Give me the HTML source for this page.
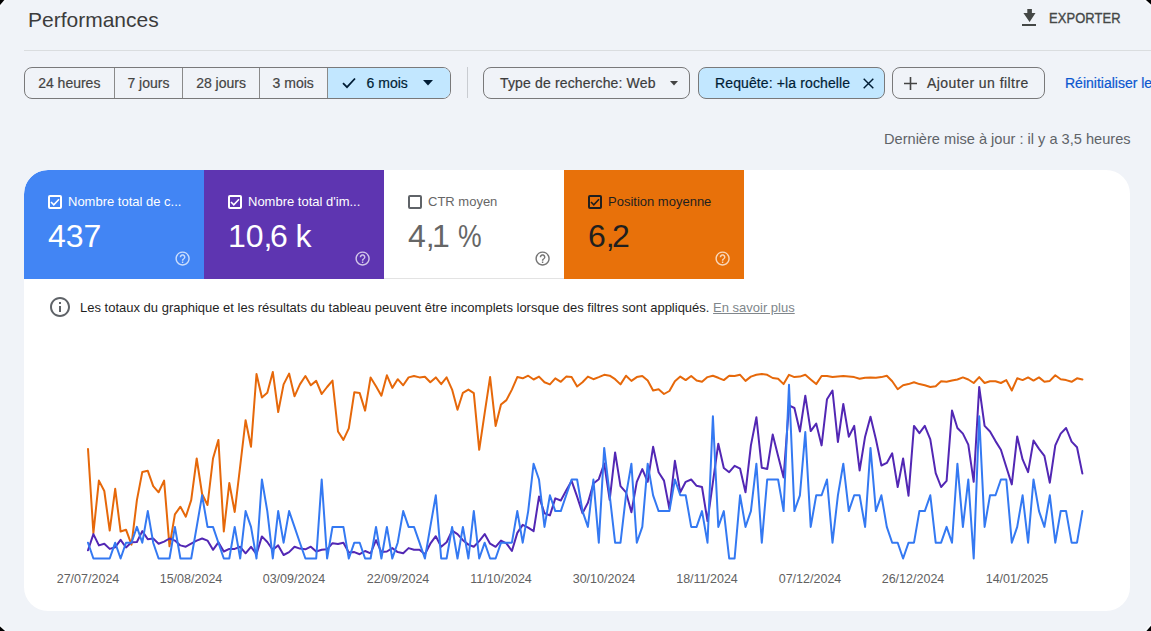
<!DOCTYPE html>
<html><head><meta charset="utf-8">
<style>
*{box-sizing:border-box;margin:0;padding:0}
html,body{width:1151px;height:631px;overflow:hidden;background:#f0f3f8;font-family:"Liberation Sans",sans-serif;color:#1f1f1f}
.abs{position:absolute}
.corner{position:absolute;width:0;height:0}
#title{left:28px;top:8px;font-size:21px;color:#3c3c3c;white-space:nowrap}
#hr{left:24px;top:50px;width:1127px;height:1px;background:#dadddf}
#export{left:1049px;top:10px;font-size:14px;letter-spacing:0.1px;-webkit-text-stroke:0.35px #444746;transform-origin:0 0;transform:scaleX(0.925);color:#444746;white-space:nowrap}
.grp{position:absolute;top:67px;height:32px;border:1px solid #79797a;border-radius:8px;overflow:hidden;display:flex}
.seg{height:30px;line-height:30px;font-size:14px;color:#444;-webkit-text-stroke:0.2px currentColor;text-align:center;border-right:1px solid #8a8a8a;white-space:nowrap}
.btn{position:absolute;top:67px;height:32px;border:1px solid #79797a;border-radius:8px;font-size:14px;color:#3c3c3c;white-space:nowrap}
.btn span{position:absolute;top:0;line-height:30px;-webkit-text-stroke:0.2px currentColor}
#card{left:24px;top:170px;width:1106px;height:441px;background:#fff;border-radius:24px;overflow:hidden}
.tile{position:absolute;top:0;width:180px;height:109px}
.tile .cb{position:absolute;left:24px;top:25px;width:14px;height:14px;border:2px solid #fff;border-radius:2px}
.tile .lbl{position:absolute;left:44px;top:24px;font-size:13px;white-space:nowrap}
.tile .val{position:absolute;left:24px;top:48px;font-size:32px;white-space:nowrap}
.tile .help{position:absolute;left:150.3px;top:79.9px;width:17.2px;height:17.2px}
.tick{position:absolute;top:572px;font-size:12.5px;color:#616161;white-space:nowrap;transform:translateX(-50%)}
</style></head>
<body>

<svg class="abs" style="left:0;top:0" width="1151" height="631">
<g stroke="#fff" stroke-width="1" stroke-opacity="0.85" fill="none"><line x1="6" y1="0" x2="0" y2="7"/><line x1="1144" y1="0" x2="1151" y2="6"/><line x1="0" y1="625" x2="6.5" y2="631"/><line x1="1151" y1="624" x2="1145" y2="631"/></g>
<g fill="#000"><polygon points="-1,-1 5.2,-1 -1,6.2"/><polygon points="1144.8,-1 1152,-1 1152,5.3"/><polygon points="-1,625.6 6.2,632 -1,632"/><polygon points="1152,624.6 1152,632 1145.6,632"/></g></svg>
<div id="title" class="abs">Performances</div>
<div id="hr" class="abs"></div>
<svg class="abs" style="left:1022px;top:9px" width="14" height="17" viewBox="0 0 14 17"><path d="M5.3 0h4.6v4.1H13.5L7.6 13 1.4 4.1h3.9z" fill="#444746"/><rect x="0" y="15" width="14" height="2" fill="#444746"/></svg>
<div id="export" class="abs">EXPORTER</div>

<div class="grp" style="left:24px;width:427px">
  <div class="seg" style="width:90px">24 heures</div>
  <div class="seg" style="width:69px">7 jours</div>
  <div class="seg" style="width:77px">28 jours</div>
  <div class="seg" style="width:68px">3 mois</div>
  <div class="seg" style="width:123px;border-right:none;background:#c2e7ff;color:#001d35;position:relative">
    <svg class="abs" style="left:14px;top:9px" width="14" height="12" viewBox="0 0 14 12"><path d="M1 6.2l4 4L13 1.5" stroke="#001d35" stroke-width="1.8" fill="none"/></svg>
    <span class="abs" style="left:39px;top:0">6 mois</span>
    <svg class="abs" style="left:95px;top:12px" width="10" height="6" viewBox="0 0 10 6"><path d="M0 0h10L5 5.5z" fill="#001d35"/></svg>
  </div>
</div>
<div class="abs" style="left:467px;top:67px;width:1px;height:31px;background:#c9ccd1"></div>

<div class="btn" style="left:483px;width:207px">
  <span style="left:16px;letter-spacing:0.15px">Type de recherche: Web</span>
  <svg class="abs" style="left:186px;top:13px" width="8" height="5" viewBox="0 0 8 5"><path d="M0 0h8L4 4.5z" fill="#444"/></svg>
</div>
<div class="btn" style="left:698px;width:187px;background:#c2e7ff;color:#001d35">
  <span style="left:16px;letter-spacing:0.12px">Requête: +la rochelle</span>
  <svg class="abs" style="left:163.5px;top:10px" width="11" height="11" viewBox="0 0 11 11"><path d="M0.7 0.7l9.6 9.6M10.3 0.7l-9.6 9.6" stroke="#001d35" stroke-width="1.45"/></svg>
</div>
<div class="btn" style="left:892px;width:153px">
  <svg class="abs" style="left:11px;top:9px" width="13" height="13" viewBox="0 0 13 13"><path d="M6.5 0v13M0 6.5h13" stroke="#444" stroke-width="1.6"/></svg>
  <span style="left:34px;letter-spacing:0.45px">Ajouter un filtre</span>
</div>
<div class="abs" style="left:1065px;top:75px;font-size:14px;color:#0b57d0;-webkit-text-stroke:0.2px #0b57d0;white-space:nowrap">Réinitialiser les filtres</div>

<div class="abs" style="left:884px;top:131px;font-size:14.6px;color:#5f6368;white-space:nowrap">Dernière mise à jour : il y a 3,5 heures</div>

<div id="card" class="abs">
  <div class="tile" style="left:0;background:#4285f4;color:#fff;border-top-left-radius:24px">
    <div class="cb"></div>
    <svg class="abs" style="left:26px;top:28px" width="10" height="8" viewBox="0 0 10 8"><path d="M1 4l2.8 2.8L9 1.2" stroke="#fff" stroke-width="1.6" fill="none"/></svg>
    <div class="lbl">Nombre total de c...</div>
    <div class="val">437</div>
    <svg class="help" viewBox="0 0 24 24"><path d="M11 18h2v-2h-2v2zm1-16C6.48 2 2 6.48 2 12s4.48 10 10 10 10-4.48 10-10S17.52 2 12 2zm0 18c-4.41 0-8-3.59-8-8s3.59-8 8-8 8 3.59 8 8-3.59 8-8 8zm0-14c-2.21 0-4 1.79-4 4h2c0-1.1.9-2 2-2s2 .9 2 2c0 2-3 1.75-3 5h2c0-2.25 3-2.5 3-5 0-2.21-1.79-4-4-4z" fill="rgba(255,255,255,.72)"/></svg>
  </div>
  <div class="tile" style="left:180px;background:#5e35b1;color:#fff">
    <div class="cb"></div>
    <svg class="abs" style="left:26px;top:28px" width="10" height="8" viewBox="0 0 10 8"><path d="M1 4l2.8 2.8L9 1.2" stroke="#fff" stroke-width="1.6" fill="none"/></svg>
    <div class="lbl">Nombre total d'im...</div>
    <div class="val">10<span style="letter-spacing:-2.6px">,</span>6<span style="letter-spacing:-1px"> </span>k</div>
    <svg class="help" viewBox="0 0 24 24"><path d="M11 18h2v-2h-2v2zm1-16C6.48 2 2 6.48 2 12s4.48 10 10 10 10-4.48 10-10S17.52 2 12 2zm0 18c-4.41 0-8-3.59-8-8s3.59-8 8-8 8 3.59 8 8-3.59 8-8 8zm0-14c-2.21 0-4 1.79-4 4h2c0-1.1.9-2 2-2s2 .9 2 2c0 2-3 1.75-3 5h2c0-2.25 3-2.5 3-5 0-2.21-1.79-4-4-4z" fill="rgba(255,255,255,.72)"/></svg>
  </div>
  <div class="tile" style="left:360px;background:#fff;color:#666;border-bottom:1px solid #e3e3e3">
    <div class="cb" style="border-color:#5f6368"></div>
    <div class="lbl">CTR moyen</div>
    <div class="val">4<span style="letter-spacing:-2.6px">,</span>1<span style="letter-spacing:-1px"> </span><span style="display:inline-block;transform:scaleX(0.83);transform-origin:0 0">%</span></div>
    <svg class="help" viewBox="0 0 24 24"><path d="M11 18h2v-2h-2v2zm1-16C6.48 2 2 6.48 2 12s4.48 10 10 10 10-4.48 10-10S17.52 2 12 2zm0 18c-4.41 0-8-3.59-8-8s3.59-8 8-8 8 3.59 8 8-3.59 8-8 8zm0-14c-2.21 0-4 1.79-4 4h2c0-1.1.9-2 2-2s2 .9 2 2c0 2-3 1.75-3 5h2c0-2.25 3-2.5 3-5 0-2.21-1.79-4-4-4z" fill="#757575"/></svg>
  </div>
  <div class="tile" style="left:540px;background:#e8710a;color:#1f1f1f">
    <div class="cb" style="border-color:#1f1f1f"></div>
    <svg class="abs" style="left:26px;top:28px" width="10" height="8" viewBox="0 0 10 8"><path d="M1 4l2.8 2.8L9 1.2" stroke="#1f1f1f" stroke-width="1.6" fill="none"/></svg>
    <div class="lbl">Position moyenne</div>
    <div class="val">6<span style="letter-spacing:-2.6px">,</span>2</div>
    <svg class="help" viewBox="0 0 24 24"><path d="M11 18h2v-2h-2v2zm1-16C6.48 2 2 6.48 2 12s4.48 10 10 10 10-4.48 10-10S17.52 2 12 2zm0 18c-4.41 0-8-3.59-8-8s3.59-8 8-8 8 3.59 8 8-3.59 8-8 8zm0-14c-2.21 0-4 1.79-4 4h2c0-1.1.9-2 2-2s2 .9 2 2c0 2-3 1.75-3 5h2c0-2.25 3-2.5 3-5 0-2.21-1.79-4-4-4z" fill="rgba(255,255,255,.72)"/></svg>
  </div>
</div>

<svg class="abs" style="left:48px;top:295.4px" width="24" height="24" viewBox="0 0 24 24"><path d="M11 7h2v2h-2zm0 4h2v6h-2zm1-9C6.48 2 2 6.48 2 12s4.48 10 10 10 10-4.48 10-10S17.52 2 12 2zm0 18c-4.41 0-8-3.59-8-8s3.59-8 8-8 8 3.59 8 8-3.59 8-8 8z" fill="#5f6368"/></svg>
<div class="abs" style="left:80px;top:300px;font-size:13px;color:#1f1f1f;white-space:nowrap">Les totaux du graphique et les résultats du tableau peuvent être incomplets lorsque des filtres sont appliqués. <span style="color:#80868b;text-decoration:underline">En savoir plus</span></div>

<div class="tick" style="left:88px">27/07/2024</div>
<div class="tick" style="left:191px">15/08/2024</div>
<div class="tick" style="left:294px">03/09/2024</div>
<div class="tick" style="left:398px">22/09/2024</div>
<div class="tick" style="left:501px">11/10/2024</div>
<div class="tick" style="left:604px">30/10/2024</div>
<div class="tick" style="left:707px">18/11/2024</div>
<div class="tick" style="left:810px">07/12/2024</div>
<div class="tick" style="left:913px">26/12/2024</div>
<div class="tick" style="left:1017px">14/01/2025</div>

<!--CHART--><svg class="abs" style="left:0;top:0" width="1151" height="631" viewBox="0 0 1151 631">
<polyline fill="none" stroke="#e6680a" stroke-width="2" stroke-linejoin="round" stroke-linecap="round" points="88.0,448.9 93.4,533.2 98.9,480.6 104.3,491.0 109.7,530.6 115.2,488.8 120.6,531.5 126.0,529.7 131.5,544.6 136.9,500.1 142.3,471.9 147.8,470.8 153.2,486.2 158.6,492.3 164.1,480.6 169.5,546.3 174.9,514.4 180.4,506.7 185.8,516.7 191.2,500.1 196.7,458.5 202.1,494.0 207.5,505.0 213.0,458.5 218.4,439.9 223.8,531.5 229.3,483.0 234.7,512.0 240.2,466.0 245.6,420.2 251.0,446.8 256.5,374.0 261.9,397.5 267.3,392.8 272.8,371.9 278.2,412.0 283.6,384.4 289.1,373.6 294.5,396.3 299.9,384.4 305.4,376.0 310.8,385.3 316.2,380.9 321.7,394.0 327.1,387.0 332.5,380.6 338.0,431.5 343.4,439.9 348.8,428.4 354.3,392.3 359.7,393.1 365.1,410.6 370.6,377.4 376.0,386.2 381.4,395.7 386.9,375.3 392.3,387.9 397.7,379.2 403.2,385.3 408.6,377.4 414.0,376.0 419.5,377.4 424.9,376.7 430.3,382.3 435.8,377.4 441.2,384.1 446.6,377.4 452.1,389.6 457.5,409.7 462.9,392.8 468.4,389.6 473.8,393.1 479.2,449.8 484.7,412.8 490.1,377.1 495.6,425.9 501.0,404.5 506.4,400.1 511.9,389.6 517.3,377.1 522.7,378.3 528.2,375.7 533.6,379.5 539.0,376.6 544.5,382.3 549.9,384.4 555.3,378.3 560.8,381.8 566.2,376.6 571.6,377.1 577.1,386.5 582.5,382.3 587.9,376.6 593.4,379.2 598.8,377.1 604.2,374.8 609.7,375.7 615.1,379.2 620.5,384.4 626.0,375.7 631.4,380.9 636.8,377.1 642.3,376.0 647.7,380.6 653.1,390.5 658.6,389.3 664.0,394.0 669.4,391.0 674.9,381.3 680.3,376.6 685.7,380.1 691.2,376.0 696.6,380.6 702.0,381.8 707.5,377.1 712.9,375.7 718.3,377.8 723.8,380.1 729.2,375.7 734.6,376.0 740.1,374.8 745.5,380.9 750.9,376.6 756.4,374.8 761.8,373.9 767.2,374.8 772.7,378.0 778.1,378.8 783.6,384.1 789.0,374.8 794.4,377.1 799.9,376.6 805.3,374.8 810.7,379.5 816.2,384.1 821.6,376.0 827.0,376.0 832.5,377.1 837.9,376.6 843.3,376.0 848.8,376.6 854.2,377.1 859.6,378.8 865.1,377.8 870.5,377.4 875.9,377.8 881.4,377.1 886.8,375.7 892.2,381.3 897.7,389.3 903.1,385.3 908.5,384.1 914.0,382.3 919.4,384.1 924.8,385.3 930.3,387.0 935.7,386.2 941.1,381.3 946.6,381.8 952.0,380.6 957.4,379.5 962.9,377.4 968.3,379.5 973.7,383.0 979.2,377.1 984.6,383.0 990.0,381.3 995.5,381.3 1000.9,383.0 1006.3,380.1 1011.8,390.5 1017.2,378.3 1022.6,380.1 1028.1,377.4 1033.5,380.6 1039.0,377.4 1044.4,381.8 1049.8,380.9 1055.3,375.3 1060.7,379.2 1066.1,380.1 1071.6,381.8 1077.0,378.3 1082.4,379.5"/>
<polyline fill="none" stroke="#5227b4" stroke-width="2" stroke-linejoin="round" stroke-linecap="round" points="88.0,550.3 93.4,534.1 98.9,545.4 104.3,543.7 109.7,548.9 115.2,547.2 120.6,539.9 126.0,547.5 131.5,542.3 136.9,542.0 142.3,531.1 147.8,539.3 153.2,538.5 158.6,543.7 164.1,541.6 169.5,538.5 174.9,540.6 180.4,545.4 185.8,546.7 191.2,543.7 196.7,540.6 202.1,538.5 207.5,540.6 213.0,549.8 218.4,542.3 223.8,551.5 229.3,548.9 234.7,548.9 240.2,546.8 245.6,553.3 251.0,546.8 256.5,554.2 261.9,536.4 267.3,542.0 272.8,549.8 278.2,545.4 283.6,555.0 289.1,552.1 294.5,546.7 299.9,548.6 305.4,549.3 310.8,546.7 316.2,551.5 321.7,549.8 327.1,549.3 332.5,543.2 338.0,544.0 343.4,542.8 348.8,552.4 354.3,552.1 359.7,554.2 365.1,551.0 370.6,553.3 376.0,540.2 381.4,552.1 386.9,551.5 392.3,548.1 397.7,552.1 403.2,553.3 408.6,548.1 414.0,549.8 419.5,549.8 424.9,554.2 430.3,543.7 435.8,536.2 441.2,546.8 446.6,542.3 452.1,530.6 457.5,534.1 462.9,540.2 468.4,544.6 473.8,546.8 479.2,541.1 484.7,534.1 490.1,543.7 495.6,546.8 501.0,540.6 506.4,543.3 511.9,551.0 517.3,532.9 522.7,524.9 528.2,527.7 533.6,531.1 539.0,496.6 544.5,513.2 549.9,515.4 555.3,498.4 560.8,500.5 566.2,490.5 571.6,480.9 577.1,496.6 582.5,513.2 587.9,502.7 593.4,483.5 598.8,479.2 604.2,463.5 609.7,499.8 615.1,452.4 620.5,486.2 626.0,492.3 631.4,512.3 636.8,481.8 642.3,469.1 647.7,481.8 653.1,446.8 658.6,472.2 664.0,480.6 669.4,508.8 674.9,460.8 680.3,492.3 685.7,481.8 691.2,479.5 696.6,485.8 702.0,487.0 707.5,521.0 712.9,482.3 718.3,443.7 723.8,468.0 729.2,472.2 734.6,465.8 740.1,468.7 745.5,492.3 750.9,445.4 756.4,417.2 761.8,467.8 767.2,469.0 772.7,434.6 778.1,455.9 783.6,477.4 789.0,405.3 794.4,408.0 799.9,431.5 805.3,395.7 810.7,431.1 816.2,423.6 821.6,445.4 827.0,399.2 832.5,390.5 837.9,442.0 843.3,404.0 848.8,436.7 854.2,425.9 859.6,470.5 865.1,436.7 870.5,416.7 875.9,439.3 881.4,465.5 886.8,462.9 892.2,453.3 897.7,487.0 903.1,458.5 908.5,495.7 914.0,425.9 919.4,433.2 924.8,425.9 930.3,439.3 935.7,473.1 941.1,487.0 946.6,480.9 952.0,410.6 957.4,428.0 962.9,433.6 968.3,444.6 973.7,481.8 979.2,387.0 984.6,425.9 990.0,431.5 995.5,441.1 1000.9,449.8 1006.3,467.0 1011.8,484.4 1017.2,436.4 1022.6,459.4 1028.1,472.2 1033.5,440.6 1039.0,448.9 1044.4,455.9 1049.8,482.7 1055.3,445.4 1060.7,433.6 1066.1,428.0 1071.6,441.6 1077.0,447.2 1082.4,473.6"/>
<polyline fill="none" stroke="#3479f2" stroke-width="2" stroke-linejoin="round" stroke-linecap="round" points="88.0,542.7 93.4,558.5 98.9,558.5 104.3,558.5 109.7,558.5 115.2,542.7 120.6,558.5 126.0,542.7 131.5,542.7 136.9,526.9 142.3,542.7 147.8,511.1 153.2,542.7 158.6,558.5 164.1,558.5 169.5,558.5 174.9,526.9 180.4,558.5 185.8,558.5 191.2,558.5 196.7,526.9 202.1,495.3 207.5,526.9 213.0,526.9 218.4,542.7 223.8,558.5 229.3,558.5 234.7,526.9 240.2,558.5 245.6,511.1 251.0,526.9 256.5,558.5 261.9,479.5 267.3,511.1 272.8,558.5 278.2,511.1 283.6,542.7 289.1,511.1 294.5,526.9 299.9,542.7 305.4,558.5 310.8,558.5 316.2,558.5 321.7,479.5 327.1,558.5 332.5,526.9 338.0,526.9 343.4,526.9 348.8,558.5 354.3,542.7 359.7,542.7 365.1,558.5 370.6,558.5 376.0,526.9 381.4,558.5 386.9,526.9 392.3,558.5 397.7,542.7 403.2,511.1 408.6,526.9 414.0,526.9 419.5,542.7 424.9,558.5 430.3,526.9 435.8,495.3 441.2,558.5 446.6,558.5 452.1,526.9 457.5,558.5 462.9,526.9 468.4,558.5 473.8,511.1 479.2,558.5 484.7,542.7 490.1,558.5 495.6,558.5 501.0,542.7 506.4,542.7 511.9,542.7 517.3,511.1 522.7,542.7 528.2,511.1 533.6,463.7 539.0,479.5 544.5,526.9 549.9,495.3 555.3,511.1 560.8,511.1 566.2,495.3 571.6,479.5 577.1,479.5 582.5,511.1 587.9,526.9 593.4,479.5 598.8,542.7 604.2,447.9 609.7,495.3 615.1,542.7 620.5,542.7 626.0,495.3 631.4,463.7 636.8,542.7 642.3,526.9 647.7,463.7 653.1,495.3 658.6,511.1 664.0,511.1 669.4,511.1 674.9,479.5 680.3,495.3 685.7,495.3 691.2,526.9 696.6,526.9 702.0,511.1 707.5,542.7 712.9,416.3 718.3,526.9 723.8,511.1 729.2,558.5 734.6,558.5 740.1,495.3 745.5,526.9 750.9,511.1 756.4,463.7 761.8,542.7 767.2,479.5 772.7,479.5 778.1,479.5 783.6,511.1 789.0,384.7 794.4,511.1 799.9,495.3 805.3,432.1 810.7,526.9 816.2,495.3 821.6,495.3 827.0,479.5 832.5,542.7 837.9,495.3 843.3,463.7 848.8,511.1 854.2,495.3 859.6,495.3 865.1,526.9 870.5,447.9 875.9,511.1 881.4,495.3 886.8,526.9 892.2,542.7 897.7,542.7 903.1,558.5 908.5,542.7 914.0,542.7 919.4,511.1 924.8,511.1 930.3,495.3 935.7,542.7 941.1,542.7 946.6,526.9 952.0,542.7 957.4,463.7 962.9,526.9 968.3,479.5 973.7,558.5 979.2,416.3 984.6,526.9 990.0,495.3 995.5,495.3 1000.9,479.5 1006.3,479.5 1011.8,542.7 1017.2,526.9 1022.6,495.3 1028.1,542.7 1033.5,479.5 1039.0,511.1 1044.4,526.9 1049.8,495.3 1055.3,542.7 1060.7,511.1 1066.1,511.1 1071.6,542.7 1077.0,542.7 1082.4,511.1"/>
</svg><!--/CHART-->
</body></html>
